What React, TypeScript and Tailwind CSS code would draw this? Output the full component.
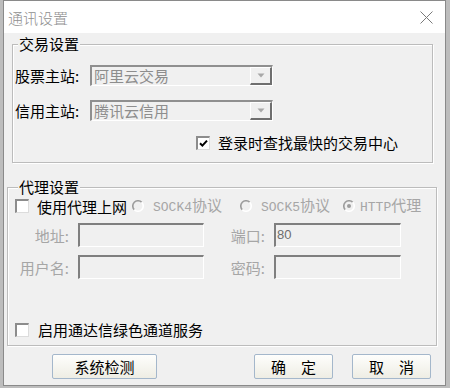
import React from "react";

const CJK = "font-['Noto_Sans_CJK_SC','Noto_Sans',sans-serif]";
const MONO = "font-['Liberation_Mono','Noto_Sans_CJK_SC',monospace]";

function Check({ checked }: { checked?: boolean }) {
  return (
    <span className="w-[14px] h-[14px] shrink-0 bg-white border-t-2 border-l-2 border-t-[#8c8c8c] border-l-[#8c8c8c] border-b border-r border-b-[#dcdcdc] border-r-[#dcdcdc] flex items-center justify-center">
      {checked && (
        <svg width="9" height="9" viewBox="0 0 9 9">
          <path d="M1 4.2 L3.4 6.6 L8 1.6" stroke="#000" strokeWidth="2" fill="none" />
        </svg>
      )}
    </span>
  );
}

function Radio({ checked }: { checked?: boolean }) {
  return (
    <svg width="12" height="12" viewBox="0 0 12 12" className="shrink-0">
      <circle cx="6" cy="6" r="5.2" fill="#f0f0f0" />
      <path d="M2.3 9.7 A5.2 5.2 0 0 1 9.7 2.3" stroke="#9c9c9c" strokeWidth="1.6" fill="none" />
      <path d="M9.7 2.3 A5.2 5.2 0 0 1 2.3 9.7" stroke="#ffffff" strokeWidth="1.6" fill="none" />
      {checked && <circle cx="6" cy="6" r="2" fill="#9c9c9c" />}
    </svg>
  );
}

function Select({ value }: { value: string }) {
  return (
    <div className="w-[183px] h-[21px] flex border-t-2 border-l-2 border-t-[#8f8f8f] border-l-[#8f8f8f] border-b border-r border-b-[#ffffff] border-r-[#ffffff] bg-[#f0f0f0]">
      <div className="flex-1 text-[#8d8d8d] pl-[2px] text-[15px] leading-[18px]">{value}</div>
      <div className="w-[22px] h-[18px] bg-[#f0f0f0] border-t border-l border-t-[#ffffff] border-l-[#ffffff] border-r-2 border-b-2 border-r-[#6f6f6f] border-b-[#6f6f6f] flex items-center justify-center">
        <svg width="8" height="5" viewBox="0 0 8 5">
          <path d="M0.5 0.5 L7.5 0.5 L4 4.5 Z" fill="#a8a8a8" />
        </svg>
      </div>
    </div>
  );
}

function Input({ value, w }: { value?: string; w: string }) {
  return (
    <div
      className={`${w} h-[24px] bg-[#f0f0f0] border-t-2 border-l-2 border-t-[#7f7f7f] border-l-[#7f7f7f] border-b border-r border-b-[#ffffff] border-r-[#ffffff] font-['Liberation_Sans',sans-serif] text-[13px] text-[#6d6d6d] leading-[20px] pl-[1px]`}
    >
      {value}
    </div>
  );
}

function Button({ label, w }: { label: string; w: string }) {
  return (
    <div
      className={`${w} h-[25px] border border-[#a4b7cb] rounded-[2px] bg-gradient-to-b from-[#fefefc] to-[#eeede4] flex items-center justify-center text-[15px] text-black leading-none`}
    >
      {label}
    </div>
  );
}

export default function App() {
  return (
    <div className={`w-[450px] h-[388px] bg-[#bdbdbd] ${CJK}`}>
      <div className="ml-[3px] w-[443px] h-[386px] border border-[#8a8a8a] flex flex-col">
        {/* title bar */}
        <div className="h-[32px] bg-white flex items-center justify-between pl-[4px] pr-[12px]">
          <span className="text-[15px] text-[#8f8f8f] font-light leading-none">通讯设置</span>
          <svg width="13" height="13" viewBox="0 0 13 13">
            <path d="M0.5 0.5 L12.5 12.5 M12.5 0.5 L0.5 12.5" stroke="#7a7a7a" strokeWidth="1" />
          </svg>
        </div>

        {/* body */}
        <div className="flex-1 bg-[#f0f0f0] flex flex-col text-[15px] leading-[17px] text-black">
          {/* group 1 */}
          <div className="relative mt-[11px] ml-[8px] w-[421px] h-[119px] border border-[#bcbcbc] shadow-[1px_1px_0_#ffffff,inset_1px_1px_0_#ffffff] flex flex-col pt-[20px] pl-[2px]">
            <span className="absolute top-[-10px] left-[5px] bg-[#f0f0f0] px-[1px]">交易设置</span>
            <div className="flex items-center">
              <span className="w-[75px]">股票主站:</span>
              <Select value="阿里云交易" />
            </div>
            <div className="flex items-center mt-[14px]">
              <span className="w-[75px]">信用主站:</span>
              <Select value="腾讯云信用" />
            </div>
            <div className="flex items-center mt-[13px] ml-[181px] gap-[8px]">
              <Check checked />
              <span>登录时查找最快的交易中心</span>
            </div>
          </div>

          {/* group 2 */}
          <div className="relative mt-[24px] ml-[3px] w-[430px] h-[159px] border border-[#bcbcbc] shadow-[1px_1px_0_#ffffff,inset_1px_1px_0_#ffffff] flex flex-col pt-[11px] pl-[7px]">
            <span className="absolute top-[-10px] left-[10px] bg-[#f0f0f0] px-[1px]">代理设置</span>
            <div className="flex items-center h-[14px]">
              <div className="w-[117px] flex items-center gap-[8px]">
                <Check />
                <span>使用代理上网</span>
              </div>
              <div className="w-[108px] flex items-center gap-[9px] text-[#a6a6a6]">
                <Radio />
                <span className={`${MONO} text-[13px]`}>
                  SOCK4<span className={CJK + " text-[15px]"}>协议</span>
                </span>
              </div>
              <div className="w-[103px] flex items-center gap-[9px] text-[#a6a6a6]">
                <Radio />
                <span className={`${MONO} text-[13px]`}>
                  SOCK5<span className={CJK + " text-[15px]"}>协议</span>
                </span>
              </div>
              <div className="flex items-center gap-[5px] text-[#a6a6a6]">
                <Radio checked />
                <span className={`${MONO} text-[13px]`}>
                  HTTP<span className={CJK + " text-[15px]"}>代理</span>
                </span>
              </div>
            </div>

            <div className="flex items-center mt-[10px] text-[#a6a6a6]">
              <span className="w-[55px] text-right pr-[1px]">地址:</span>
              <div className="ml-[8px]">
                <Input w="w-[126px]" />
              </div>
              <span className="w-[62px] text-right pr-[1px]">端口:</span>
              <div className="ml-[8px]">
                <Input w="w-[127px]" value="80" />
              </div>
            </div>
            <div className="flex items-center mt-[8px] text-[#a6a6a6]">
              <span className="w-[55px] text-right pr-[1px]">用户名:</span>
              <div className="ml-[8px]">
                <Input w="w-[126px]" />
              </div>
              <span className="w-[62px] text-right pr-[1px]">密码:</span>
              <div className="ml-[8px]">
                <Input w="w-[127px]" />
              </div>
            </div>

            <div className="flex items-center mt-[42px] gap-[9px]">
              <Check />
              <span>启用通达信绿色通道服务</span>
            </div>
          </div>

          {/* buttons */}
          <div className="flex items-center mt-[8px] ml-[48px]">
            <Button label="系统检测" w="w-[105px]" />
            <div className="ml-[97px]">
              <Button label="确　定" w="w-[79px]" />
            </div>
            <div className="ml-[19px]">
              <Button label="取　消" w="w-[79px]" />
            </div>
          </div>
        </div>
      </div>
    </div>
  );
}
